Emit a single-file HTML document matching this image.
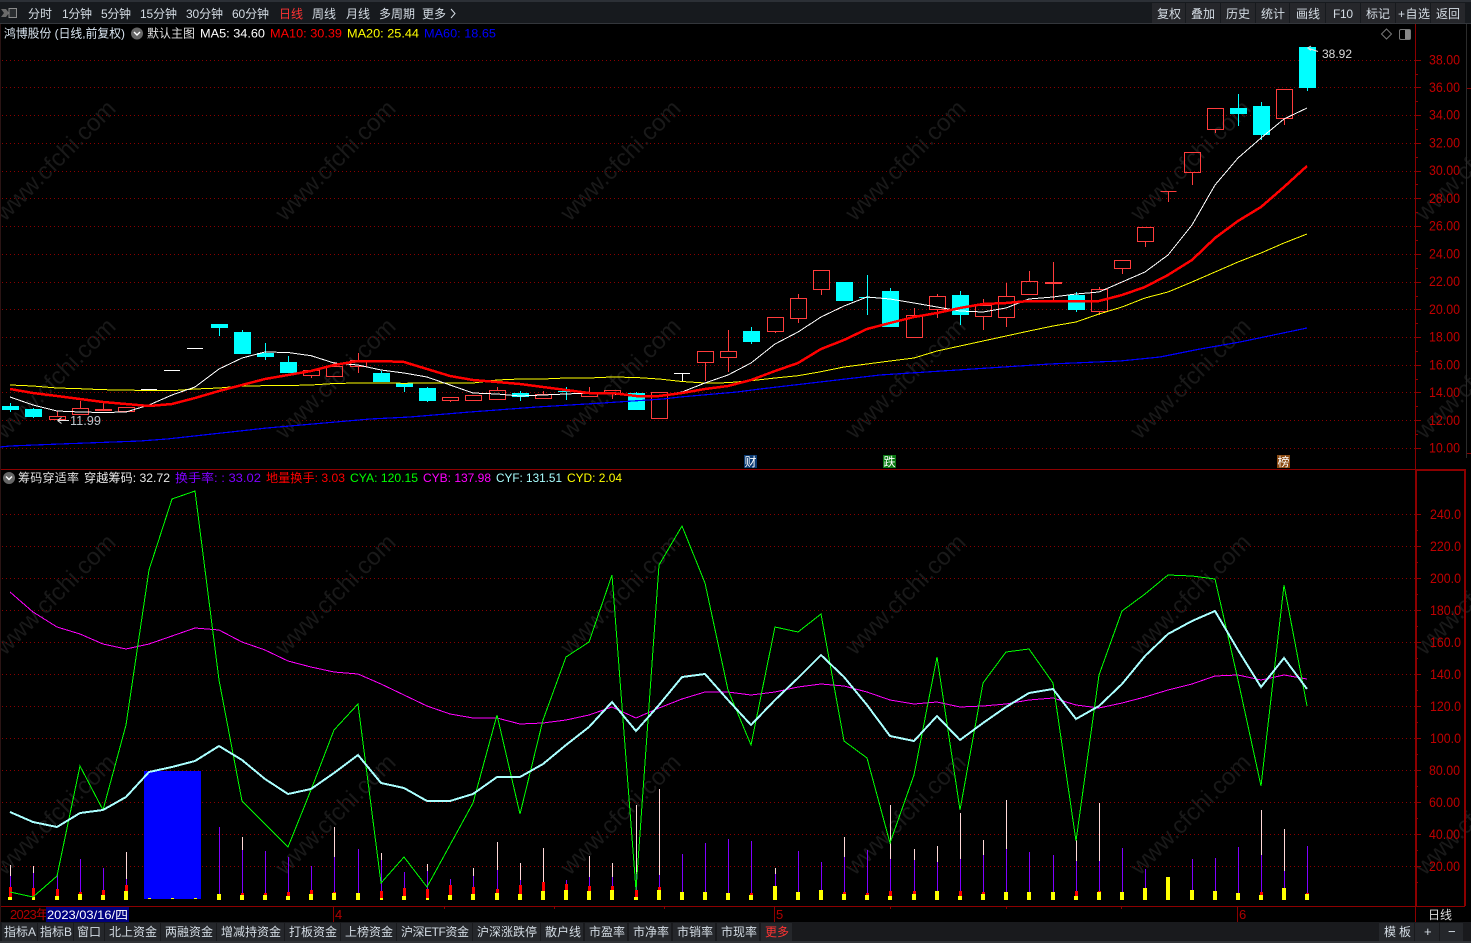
<!DOCTYPE html>
<html lang="zh">
<head>
<meta charset="utf-8">
<title>鸿博股份 日线</title>
<style>
html,body{margin:0;padding:0;background:#000;width:1471px;height:943px;overflow:hidden}
svg{display:block}
text{font-family:"Liberation Sans","Noto Sans CJK SC",sans-serif;font-size:12px}
.b{fill:#d4dce4}
.ax{fill:#c00000;font-size:14px}
.wm{fill:#191919;font-size:24px;text-anchor:middle}
.c{shape-rendering:crispEdges}
</style>
</head>
<body>
<svg xmlns="http://www.w3.org/2000/svg" width="1471" height="943" viewBox="0 0 1471 943">
<rect width="1471" height="943" fill="#000"/>

<!-- watermark -->
<g transform="translate(6,9)">
<text class="wm" x="55" y="157" transform="rotate(-45 55 157)">www.cfchi.com</text>
<text class="wm" x="335" y="157" transform="rotate(-45 335 157)">www.cfchi.com</text>
<text class="wm" x="620" y="157" transform="rotate(-45 620 157)">www.cfchi.com</text>
<text class="wm" x="905" y="157" transform="rotate(-45 905 157)">www.cfchi.com</text>
<text class="wm" x="1190" y="157" transform="rotate(-45 1190 157)">www.cfchi.com</text>
<text class="wm" x="1475" y="157" transform="rotate(-45 1475 157)">www.cfchi.com</text>
<text class="wm" x="55" y="375" transform="rotate(-45 55 375)">www.cfchi.com</text>
<text class="wm" x="335" y="375" transform="rotate(-45 335 375)">www.cfchi.com</text>
<text class="wm" x="620" y="375" transform="rotate(-45 620 375)">www.cfchi.com</text>
<text class="wm" x="905" y="375" transform="rotate(-45 905 375)">www.cfchi.com</text>
<text class="wm" x="1190" y="375" transform="rotate(-45 1190 375)">www.cfchi.com</text>
<text class="wm" x="1475" y="375" transform="rotate(-45 1475 375)">www.cfchi.com</text>
<text class="wm" x="55" y="591" transform="rotate(-45 55 591)">www.cfchi.com</text>
<text class="wm" x="335" y="591" transform="rotate(-45 335 591)">www.cfchi.com</text>
<text class="wm" x="620" y="591" transform="rotate(-45 620 591)">www.cfchi.com</text>
<text class="wm" x="905" y="591" transform="rotate(-45 905 591)">www.cfchi.com</text>
<text class="wm" x="1190" y="591" transform="rotate(-45 1190 591)">www.cfchi.com</text>
<text class="wm" x="1475" y="591" transform="rotate(-45 1475 591)">www.cfchi.com</text>
<text class="wm" x="55" y="811" transform="rotate(-45 55 811)">www.cfchi.com</text>
<text class="wm" x="335" y="811" transform="rotate(-45 335 811)">www.cfchi.com</text>
<text class="wm" x="620" y="811" transform="rotate(-45 620 811)">www.cfchi.com</text>
<text class="wm" x="905" y="811" transform="rotate(-45 905 811)">www.cfchi.com</text>
<text class="wm" x="1190" y="811" transform="rotate(-45 1190 811)">www.cfchi.com</text>
<text class="wm" x="1475" y="811" transform="rotate(-45 1475 811)">www.cfchi.com</text>
</g>

<!-- grid -->
<g class="c" stroke="#8a0000" stroke-width="1" stroke-dasharray="1 3" fill="none">
<path d="M2 60.5H1415M2 87.5H1415M2 115.5H1415M2 143.5H1415M2 171.5H1415M2 198.5H1415M2 226.5H1415M2 254.5H1415M2 282.5H1415M2 309.5H1415M2 337.5H1415M2 365.5H1415M2 392.5H1415M2 420.5H1415M2 448.5H1415"/>
<path d="M2 514.5H1415M2 546.5H1415M2 578.5H1415M2 610.5H1415M2 642.5H1415M2 674.5H1415M2 706.5H1415M2 738.5H1415M2 770.5H1415M2 802.5H1415M2 834.5H1415M2 866.5H1415"/>
</g>

<!-- axis lines -->
<g class="c" stroke="#8c0000" fill="none">
<path d="M1415.5 24V922"/>
<path d="M0 469.5H1415M0 906.5H1465"/>
<path d="M1415 60.5h6M1415 87.5h6M1415 115.5h6M1415 143.5h6M1415 171.5h6M1415 198.5h6M1415 226.5h6M1415 254.5h6M1415 282.5h6M1415 309.5h6M1415 337.5h6M1415 365.5h6M1415 392.5h6M1415 420.5h6M1415 448.5h6"/>
<path d="M1415 74.5h3M1415 101.5h3M1415 129.5h3M1415 157.5h3M1415 184.5h3M1415 212.5h3M1415 240.5h3M1415 268.5h3M1415 296.5h3M1415 323.5h3M1415 351.5h3M1415 379.5h3M1415 406.5h3M1415 434.5h3"/>
<path d="M1415 514.5h6M1415 546.5h6M1415 578.5h6M1415 610.5h6M1415 642.5h6M1415 674.5h6M1415 706.5h6M1415 738.5h6M1415 770.5h6M1415 802.5h6M1415 834.5h6M1415 866.5h6"/>
<path d="M1415 530.5h3M1415 562.5h3M1415 594.5h3M1415 626.5h3M1415 658.5h3M1415 690.5h3M1415 722.5h3M1415 754.5h3M1415 786.5h3M1415 818.5h3M1415 850.5h3M1415 882.5h3"/>
<path d="M1416 470H1465V906" stroke-width="2"/>
<path d="M1416 470V906" stroke-width="2"/>
<path d="M333.5 906V922M774.5 906V922M1237.5 906V922M444.5 906v3M554.5 906v3M664.5 906v3M890.5 906v3M1006.5 906v3M1121.5 906v3"/>
<path d="M1467 88.5h4M1467 453.5h4"/>
</g>
<path class="c" d="M1466.5 24V458" stroke="#2b2b2b" stroke-width="1" fill="none"/>
<path class="c" d="M0.5 24V922" stroke="#2a1414" stroke-width="1" fill="none"/>

<!-- axis labels -->
<g class="ax">
<text class="ax" x="1429" y="64.5" textLength="31" lengthAdjust="spacingAndGlyphs">38.00</text>
<text class="ax" x="1429" y="92" textLength="31" lengthAdjust="spacingAndGlyphs">36.00</text>
<text class="ax" x="1429" y="119.5" textLength="31" lengthAdjust="spacingAndGlyphs">34.00</text>
<text class="ax" x="1429" y="147.5" textLength="31" lengthAdjust="spacingAndGlyphs">32.00</text>
<text class="ax" x="1429" y="175" textLength="31" lengthAdjust="spacingAndGlyphs">30.00</text>
<text class="ax" x="1429" y="203" textLength="31" lengthAdjust="spacingAndGlyphs">28.00</text>
<text class="ax" x="1429" y="230.5" textLength="31" lengthAdjust="spacingAndGlyphs">26.00</text>
<text class="ax" x="1429" y="258.5" textLength="31" lengthAdjust="spacingAndGlyphs">24.00</text>
<text class="ax" x="1429" y="286" textLength="31" lengthAdjust="spacingAndGlyphs">22.00</text>
<text class="ax" x="1429" y="314" textLength="31" lengthAdjust="spacingAndGlyphs">20.00</text>
<text class="ax" x="1429" y="341.5" textLength="31" lengthAdjust="spacingAndGlyphs">18.00</text>
<text class="ax" x="1429" y="369.5" textLength="31" lengthAdjust="spacingAndGlyphs">16.00</text>
<text class="ax" x="1429" y="397" textLength="31" lengthAdjust="spacingAndGlyphs">14.00</text>
<text class="ax" x="1429" y="425" textLength="31" lengthAdjust="spacingAndGlyphs">12.00</text>
<text class="ax" x="1429" y="452.5" textLength="31" lengthAdjust="spacingAndGlyphs">10.00</text>
<text class="ax" x="1430" y="519" textLength="31" lengthAdjust="spacingAndGlyphs">240.0</text>
<text class="ax" x="1430" y="551" textLength="31" lengthAdjust="spacingAndGlyphs">220.0</text>
<text class="ax" x="1430" y="583" textLength="31" lengthAdjust="spacingAndGlyphs">200.0</text>
<text class="ax" x="1430" y="615" textLength="31" lengthAdjust="spacingAndGlyphs">180.0</text>
<text class="ax" x="1430" y="647" textLength="31" lengthAdjust="spacingAndGlyphs">160.0</text>
<text class="ax" x="1430" y="679" textLength="31" lengthAdjust="spacingAndGlyphs">140.0</text>
<text class="ax" x="1430" y="711" textLength="31" lengthAdjust="spacingAndGlyphs">120.0</text>
<text class="ax" x="1430" y="743" textLength="31" lengthAdjust="spacingAndGlyphs">100.0</text>
<text class="ax" x="1429" y="775" textLength="31" lengthAdjust="spacingAndGlyphs">80.00</text>
<text class="ax" x="1429" y="807" textLength="31" lengthAdjust="spacingAndGlyphs">60.00</text>
<text class="ax" x="1429" y="839" textLength="31" lengthAdjust="spacingAndGlyphs">40.00</text>
<text class="ax" x="1429" y="871" textLength="31" lengthAdjust="spacingAndGlyphs">20.00</text>
</g>

<!-- candles -->
<g class="c">
<path fill="none" stroke="#ff3c3c" d="M49.5 416.5h16v3h-16zM57.5 411V416M72.5 408.5h16v6h-16zM80.5 401V408M95.5 409.5h16v1h-16zM103.5 402V409M118.5 407.5h16v4h-16zM303.5 370.5h16v5h-16zM311.5 375V378M326.5 366.5h16v10h-16zM334.5 362V366M350.5 360.5h16v6h-16zM358.5 353V360M358.5 366V373M442.5 397.5h16v3h-16zM450.5 400V402M465.5 395.5h16v5h-16zM473.5 400V401M489.5 390.5h16v9h-16zM497.5 387V390M497.5 399V400M535.5 394.5h16v4h-16zM543.5 391V394M581.5 393.5h16v3h-16zM589.5 387V393M589.5 396V397M604.5 390.5h16v3h-16zM612.5 393V399M651.5 392.5h16v26h-16zM697.5 351.5h16v11h-16zM705.5 362V381M720.5 351.5h16v6h-16zM728.5 330V351M728.5 357V372M767.5 317.5h16v14h-16zM775.5 331V333M790.5 298.5h16v20h-16zM798.5 294V298M798.5 318V323M813.5 270.5h16v19h-16zM821.5 290V295M906.5 315.5h16v22h-16zM914.5 308V315M929.5 296.5h16v13h-16zM937.5 294V296M937.5 309V318M975.5 305.5h16v11h-16zM983.5 299V305M983.5 316V330M998.5 296.5h16v21h-16zM1006.5 283V296M1006.5 317V327M1021.5 281.5h16v13h-16zM1029.5 271V281M1045.5 282.5h16v1h-16zM1053.5 262V282M1053.5 284V301M1091.5 289.5h16v22h-16zM1099.5 287V289M1099.5 312V315M1114.5 260.5h16v8h-16zM1122.5 269V274M1137.5 227.5h16v14h-16zM1145.5 242V247M1160.5 191.5h16M1168.5 192V202M1184.5 152.5h16v20h-16zM1192.5 173V185M1207.5 108.5h16v21h-16zM1215.5 130V133M1276.5 89.5h16v29h-16zM1284.5 119V125"/>
<path fill="#00ffff" d="M2 406h17v4h-17zM25 409h17v8h-17zM211 324h17v4h-17zM234 332h17v22h-17zM257 353h17v4h-17zM280 362h17v11h-17zM373 373h17v9h-17zM396 383h17v4h-17zM419 388h17v13h-17zM512 393h17v4h-17zM558 391h17v1h-17zM628 393h17v17h-17zM743 331h17v11h-17zM836 282h17v19h-17zM859 297h17v1h-17zM882 291h17v36h-17zM952 295h17v20h-17zM1068 295h17v15h-17zM1230 108h17v6h-17zM1253 106h17v29h-17zM1299 47h17v41h-17z"/>
<path fill="none" stroke="#00ffff" d="M10.5 403V412M33.5 408V418M219.5 328V336M242.5 330V332M265.5 343V360M288.5 356V362M381.5 371V373M404.5 387V392M427.5 387V402M520.5 391V401M566.5 387V400M636.5 392V393M751.5 327V344M867.5 275V315M890.5 288V291M960.5 291V325M1076.5 292V312M1238.5 94V126M1261.5 102V140M1307.5 88V91"/>
<path fill="none" stroke="#fff" d="M141 389.5h16M164 370.5h16M187 348.5h16M674 373.5h16M682.5 374V381"/>
</g>

<!-- MA lines -->
<g fill="none" class="c">
<polyline stroke="#0000ff" stroke-width="1.2" points="0,447 10,446 60,444 100,442.5 140,441 167,439 267,428 370,419 410,417 470,412 537,407 603,403 663,399 680,397 737,392 760,389 880,375 1050,364 1120,361 1160,357 1200,349 1240,342 1307,328"/>
<polyline stroke="#ffff00" stroke-width="1" points="10,385 33,386 57,388 80,388.7 103,389.7 126,390 149,390.7 172,390.7 195,389 219,388 242,386 265,385.7 288,385.5 311,385 334,383.5 358,383 381,383 404,383.3 427,383 450,383 473,383 497,380 520,379 543,379 566,378 589,378 612,377 636,377.5 659,379 682,381.5 705,383 728,382.7 751,380.7 775,378 798,375.7 821,371.7 844,367 867,364 890,361 914,358 937,351 960,346 983,341 1006,336 1029,331 1053,326 1076,322 1099,314 1122,307 1145,298 1168,292 1192,282 1215,272 1238,262 1261,253 1284,243 1307,234"/>
<polyline stroke="#ffffff" stroke-width="1" points="10,397 33,405 57,411 80,412 103,412.5 126,412 149,405 172,395 195,387 219,369 242,358 265,352 288,352.5 311,355.7 334,363 358,365 381,370 404,373 427,377 450,385 473,393 497,394 520,396 543,395 566,394 589,393 612,394 636,396 659,396 682,392 705,383 728,375 751,363 775,344 798,332 821,317 844,306 867,297 890,299 914,303 937,307 960,311 983,312 1006,308 1029,299 1053,297 1076,294 1099,292 1122,282 1145,272 1168,255 1192,225 1215,185 1238,158 1261,138 1284,119 1307,108"/>
<polyline stroke="#ff0000" stroke-width="2.5" points="10,389 33,393 57,396 80,399 103,402 126,404 149,406 172,404 195,398 219,391 242,385 265,379 288,375 311,371 334,365 358,361 381,361 404,362 427,369 450,376 473,380 497,382 520,384 543,387 566,390 589,393 612,393 636,396 659,396 682,393 705,389 728,386 751,380 775,371 798,363 821,349 844,340 867,329 890,323 914,317 937,313 960,308 983,304 1006,303 1029,301 1053,301 1076,301 1099,301 1122,295 1145,287 1168,275 1192,260 1215,238 1238,221 1261,207 1284,187 1307,166"/>
</g>

<!-- price markers -->
<path d="M1318 51.5L1309 48.5M1307.5 48l3.5-2M1307.5 48l3.5 2.5" stroke="#e8e8e8" stroke-width="1" fill="none"/>
<text x="1322" y="58" fill="#dcdcdc" textLength="30" lengthAdjust="spacingAndGlyphs">38.92</text>
<path d="M69 420.5H58M57.5 420.5l4-3M57.5 420.5l4 3" stroke="#e8e8e8" stroke-width="1" fill="none"/>
<text x="70" y="425" fill="#bcc4cc" style="font-size:13px" textLength="31" lengthAdjust="spacingAndGlyphs">11.99</text>

<!-- event tags -->
<rect x="744" y="455" width="13" height="13" fill="#0a3a72"/>
<text x="744.5" y="466" fill="#fff">财</text>
<rect x="883" y="455" width="13" height="13" fill="#0a7a12"/>
<text x="883.5" y="466" fill="#fff">跌</text>
<rect x="1277" y="455" width="13" height="13" fill="#8a4a12"/>
<text x="1277.5" y="466" fill="#fff">榜</text>

<!-- lower volume bars -->
<g class="c">
<rect x="144" y="771" width="57" height="128" fill="#0000ff"/>
<path fill="#ffff00" d="M148 898h3v1h-3zM171 898h3v1h-3zM194 898h3v1h-3z"/>
<path fill="none" stroke="#8000ff" d="M10.5 876V900M33.5 873V900M57.5 875V900M80.5 859V900M103.5 868V900M126.5 879V900M219.5 827V900M242.5 850V900M265.5 851V900M288.5 857V900M311.5 866V900M334.5 857V900M358.5 849V900M381.5 860V900M404.5 872V900M427.5 871V900M450.5 879V900M473.5 876V900M497.5 870V900M520.5 880V900M566.5 880V900M589.5 877V900M612.5 877V900M636.5 874V900M659.5 875V900M682.5 854V900M705.5 843V900M728.5 839V900M751.5 841V900M775.5 874V900M798.5 851V900M821.5 862V900M844.5 857V900M867.5 850V900M890.5 859V900M914.5 860V900M937.5 862V900M960.5 859V900M983.5 855V900M1006.5 849V900M1029.5 852V900M1053.5 855V900M1076.5 861V900M1099.5 861V900M1122.5 848V900M1145.5 869V900M1192.5 859V900M1215.5 858V900M1238.5 847V900M1261.5 855V900M1284.5 871V900M1307.5 846V900"/>
<path fill="none" stroke="#ffd8d8" d="M10.5 865V876M33.5 866V873M126.5 852V879M242.5 837V850M334.5 827V857M381.5 853V860M427.5 864V871M473.5 868V876M497.5 842V870M520.5 863V880M543.5 848V882M589.5 856V877M612.5 863V877M636.5 805V874M659.5 789V875M775.5 868V874M844.5 837V857M890.5 805V859M914.5 849V860M937.5 846V862M960.5 813V859M983.5 840V855M1006.5 800V849M1076.5 840V861M1099.5 803V861M1261.5 810V855M1284.5 829V871"/>
<path fill="#ff0000" d="M9 887h3v13h-3zM32 888h3v12h-3zM56 889h3v11h-3zM79 892h3v8h-3zM102 890h3v10h-3zM125 885h3v15h-3zM241 893h3v7h-3zM264 893h3v7h-3zM287 892h3v8h-3zM310 890h3v10h-3zM333 892h3v8h-3zM380 891h3v9h-3zM403 888h3v12h-3zM426 889h3v11h-3zM449 885h3v15h-3zM472 887h3v13h-3zM496 889h3v11h-3zM519 885h3v15h-3zM542 882h3v18h-3zM565 884h3v16h-3zM588 886h3v14h-3zM611 886h3v14h-3zM635 890h3v10h-3zM658 887h3v13h-3zM750 893h3v7h-3zM843 892h3v8h-3zM866 893h3v7h-3zM889 891h3v9h-3zM913 891h3v9h-3zM959 891h3v9h-3zM982 892h3v8h-3zM1075 891h3v9h-3zM1098 891h3v9h-3zM1260 892h3v8h-3zM1306 893h3v7h-3z"/>
<path fill="#ffff00" d="M8 897h4v3h-4zM32 897h3v3h-3zM55 896h4v4h-4zM78 894h4v6h-4zM101 895h4v5h-4zM124 891h4v9h-4zM217 894h4v6h-4zM240 895h4v5h-4zM263 895h4v5h-4zM286 896h4v4h-4zM309 894h4v6h-4zM332 893h4v7h-4zM356 893h4v7h-4zM380 898h3v2h-3zM402 896h4v4h-4zM426 898h3v2h-3zM448 895h4v5h-4zM471 894h4v6h-4zM495 893h4v7h-4zM518 894h4v6h-4zM541 891h4v9h-4zM564 890h4v10h-4zM587 891h4v9h-4zM610 890h4v10h-4zM634 897h4v3h-4zM657 890h4v10h-4zM680 892h4v8h-4zM703 892h4v8h-4zM726 893h4v7h-4zM749 895h4v5h-4zM773 886h4v14h-4zM796 892h4v8h-4zM819 890h4v10h-4zM842 894h4v6h-4zM865 895h4v5h-4zM888 896h4v4h-4zM912 894h4v6h-4zM935 891h4v9h-4zM958 896h4v4h-4zM981 894h4v6h-4zM1004 892h4v8h-4zM1027 892h4v8h-4zM1051 892h4v8h-4zM1074 896h4v4h-4zM1097 892h4v8h-4zM1120 892h4v8h-4zM1143 888h4v12h-4zM1166 877h4v23h-4zM1190 890h4v10h-4zM1213 891h4v9h-4zM1236 893h4v7h-4zM1259 895h4v5h-4zM1282 888h4v12h-4zM1305 894h4v6h-4z"/>
</g>

<!-- lower lines -->
<g fill="none" class="c">
<polyline stroke="#ff00ff" stroke-width="1" points="10,592 33,612 57,627 80,634 103,644 126,649 149,644 172,636 195,628 219,630 242,642 265,650 288,661 311,667 334,672 358,674 381,684 404,695 427,706 450,714 473,718 497,718 520,724 543,723 566,720 589,715 612,707 636,718 659,708 682,699 705,692 728,692 751,695 775,692 798,687 821,684 844,686 867,692 890,700 914,704 937,702 960,707 983,706 1006,704 1029,700 1053,698 1076,705 1099,708 1122,703 1145,697 1168,690 1192,684 1215,676 1238,675 1261,680 1284,675 1307,679"/>
<polyline stroke="#00ff00" stroke-width="1" points="10,892 33,897 57,876 80,766 103,810 126,725 149,570 172,499 195,491 219,680 242,801 265,824 288,847 311,790 334,730 358,704 381,883 404,857 427,887 450,845 473,803 497,715 520,814 543,720 566,657 589,642 612,575 636,890 659,565 682,526 705,583 728,690 751,745 775,627 798,632 821,614 844,741 867,758 890,843 914,775 937,657 960,810 983,683 1006,652 1029,649 1053,683 1076,841 1099,675 1122,611 1145,594 1168,575 1192,576 1215,579 1238,680 1261,786 1284,585 1307,706"/>
<polyline stroke="#aaffff" stroke-width="2" points="10,812 33,822 57,827 80,813 103,810 126,797 149,772 172,767 195,761 219,746 242,760 265,779 288,794 311,789 334,773 358,755 381,783 404,788 427,801 450,801 473,794 497,777 520,777 543,764 566,745 589,727 612,702 636,731 659,705 682,677 705,674 728,700 751,725 775,700 798,678 821,655 844,677 867,705 890,736 914,741 937,716 960,740 983,723 1006,707 1029,693 1053,689 1076,719 1099,706 1122,684 1145,656 1168,634 1192,621 1215,611 1238,650 1261,687 1284,658 1307,689"/>
</g>

<!-- top toolbar -->
<rect x="0" y="0" width="1471" height="24" fill="#171a1e"/>
<rect x="0" y="0" width="1471" height="2" fill="#2c3036"/>
<rect x="0" y="23" width="1471" height="1" fill="#33363b"/>
<g fill="#26272b" class="c">
<rect x="1152" y="3" width="33" height="20"/><rect x="1186" y="3" width="34" height="20"/><rect x="1221" y="3" width="34" height="20"/><rect x="1256" y="3" width="33" height="20"/><rect x="1290" y="3" width="35" height="20"/><rect x="1326" y="3" width="34" height="20"/><rect x="1361" y="3" width="34" height="20"/><rect x="1396" y="3" width="34" height="20"/><rect x="1431" y="3" width="34" height="20"/>
</g>
<path d="M1 9h5l3 4-3 4H1l3-4z" fill="#6a6a6a"/>
<rect x="9" y="8.5" width="7.5" height="9" fill="#2a2d30" stroke="#8a8a8a"/>
<g class="b">
<text class="b" x="28" y="18">分时</text>
<text class="b" x="62" y="18" textLength="30">1分钟</text>
<text class="b" x="101" y="18" textLength="30">5分钟</text>
<text class="b" x="140" y="18" textLength="37">15分钟</text>
<text class="b" x="186" y="18" textLength="37">30分钟</text>
<text class="b" x="232" y="18" textLength="37">60分钟</text>
<text x="279" y="18" fill="#ff3333">日线</text>
<text class="b" x="312" y="18">周线</text>
<text class="b" x="346" y="18">月线</text>
<text class="b" x="379" y="18">多周期</text>
<text class="b" x="422" y="18">更多</text>
<path d="M451 9l4 4.5-4 4.5" stroke="#d4dce4" fill="none"/>
<text class="b" x="1157" y="18">复权</text>
<text class="b" x="1191" y="18">叠加</text>
<text class="b" x="1226" y="18">历史</text>
<text class="b" x="1261" y="18">统计</text>
<text class="b" x="1296" y="18">画线</text>
<text class="b" x="1333" y="18" textLength="20">F10</text>
<text class="b" x="1366" y="18">标记</text>
<text class="b" x="1398" y="18" textLength="32">+自选</text>
<text class="b" x="1436" y="18">返回</text>
</g>

<!-- main header -->
<text x="4" y="37.5" fill="#d8e4f0" textLength="121" lengthAdjust="spacingAndGlyphs">鸿博股份 (日线,前复权)</text>
<circle cx="137" cy="33.5" r="6" fill="#666"/>
<path d="M134 32l3 3 3-3" stroke="#fff" stroke-width="1.4" fill="none"/>
<text x="147" y="37.5" fill="#e0e0e0">默认主图</text>
<text x="200" y="37.5" fill="#fff" textLength="65" lengthAdjust="spacingAndGlyphs">MA5: 34.60</text>
<text x="270" y="37.5" fill="#ff0000" textLength="72" lengthAdjust="spacingAndGlyphs">MA10: 30.39</text>
<text x="347" y="37.5" fill="#ffff00" textLength="72" lengthAdjust="spacingAndGlyphs">MA20: 25.44</text>
<text x="424" y="37.5" fill="#0000ff" textLength="72" lengthAdjust="spacingAndGlyphs">MA60: 18.65</text>
<path d="M1386.5 29l5 5-5 5-5-5z" fill="none" stroke="#777"/>
<rect x="1399.5" y="29.5" width="11" height="10" rx="1.5" fill="none" stroke="#777"/>
<rect x="1405" y="30" width="5" height="9" fill="#888"/>

<!-- lower header -->
<circle cx="9" cy="478" r="6" fill="#666"/>
<path d="M6 476.5l3 3 3-3" stroke="#fff" stroke-width="1.4" fill="none"/>
<text x="18" y="482" fill="#e0e0e0" textLength="61">筹码穿适率</text>
<text x="84" y="482" fill="#e8e8e8" textLength="86" lengthAdjust="spacingAndGlyphs">穿越筹码: 32.72</text>
<text x="175" y="482" fill="#8000ff" textLength="86" lengthAdjust="spacingAndGlyphs">换手率: : 33.02</text>
<text x="266" y="482" fill="#ff0000" textLength="79" lengthAdjust="spacingAndGlyphs">地量换手: 3.03</text>
<text x="350" y="482" fill="#00ff00" textLength="68" lengthAdjust="spacingAndGlyphs">CYA: 120.15</text>
<text x="423" y="482" fill="#ff00ff" textLength="68" lengthAdjust="spacingAndGlyphs">CYB: 137.98</text>
<text x="496" y="482" fill="#aaffff" textLength="66" lengthAdjust="spacingAndGlyphs">CYF: 131.51</text>
<text x="567" y="482" fill="#ffff00" textLength="55" lengthAdjust="spacingAndGlyphs">CYD: 2.04</text>

<!-- date axis -->
<text x="10" y="919" fill="#b00000" style="font-size:13px" textLength="39">2023年</text>
<rect x="46" y="907" width="83" height="15" fill="#000080"/>
<text x="47" y="919" fill="#fff" textLength="81" lengthAdjust="spacingAndGlyphs">2023/03/16/四</text>
<text x="335" y="919" fill="#b00000" style="font-size:13px">4</text>
<text x="776" y="919" fill="#b00000" style="font-size:13px">5</text>
<text x="1239" y="919" fill="#b00000" style="font-size:13px">6</text>
<text x="1428" y="919" fill="#dcdcdc">日线</text>

<!-- bottom bar -->
<rect x="0" y="922" width="1471" height="21" fill="#191a1d"/>
<rect x="0" y="941" width="1471" height="2" fill="#303236"/>
<g fill="#25272b" class="c">
<rect x="2" y="923" width="35" height="18"/><rect x="38" y="923" width="35" height="18"/><rect x="74" y="923" width="30" height="18"/><rect x="105" y="923" width="55" height="18"/><rect x="161" y="923" width="55" height="18"/><rect x="217" y="923" width="67" height="18"/><rect x="285" y="923" width="55" height="18"/><rect x="341" y="923" width="55" height="18"/><rect x="397" y="923" width="75" height="18"/><rect x="473" y="923" width="67" height="18"/><rect x="541" y="923" width="42" height="18"/><rect x="585" y="923" width="42" height="18"/><rect x="629" y="923" width="42" height="18"/><rect x="673" y="923" width="42" height="18"/><rect x="717" y="923" width="42" height="18"/><rect x="761" y="923" width="31" height="18"/>
<rect x="1379" y="923" width="35" height="18"/><rect x="1415" y="923" width="24" height="18"/><rect x="1440" y="923" width="23" height="18"/>
</g>
<text class="b" x="4" y="936" textLength="32">指标A</text>
<text class="b" x="40" y="936" textLength="32">指标B</text>
<text class="b" x="77" y="936">窗口</text>
<text class="b" x="109" y="936">北上资金</text>
<text class="b" x="165" y="936">两融资金</text>
<text class="b" x="221" y="936">增减持资金</text>
<text class="b" x="289" y="936">打板资金</text>
<text class="b" x="345" y="936">上榜资金</text>
<text class="b" x="401" y="936" textLength="68">沪深ETF资金</text>
<text class="b" x="477" y="936">沪深涨跌停</text>
<text class="b" x="545" y="936">散户线</text>
<text class="b" x="589" y="936">市盈率</text>
<text class="b" x="633" y="936">市净率</text>
<text class="b" x="677" y="936">市销率</text>
<text class="b" x="721" y="936">市现率</text>
<text x="765" y="936" fill="#ff3333">更多</text>
<text class="b" x="1384" y="936">模</text>
<text class="b" x="1399" y="936">板</text>
<text class="b" x="1424" y="936" style="font-size:13px">+</text>
<text class="b" x="1448" y="936" style="font-size:13px">−</text>
</svg>
</body>
</html>
